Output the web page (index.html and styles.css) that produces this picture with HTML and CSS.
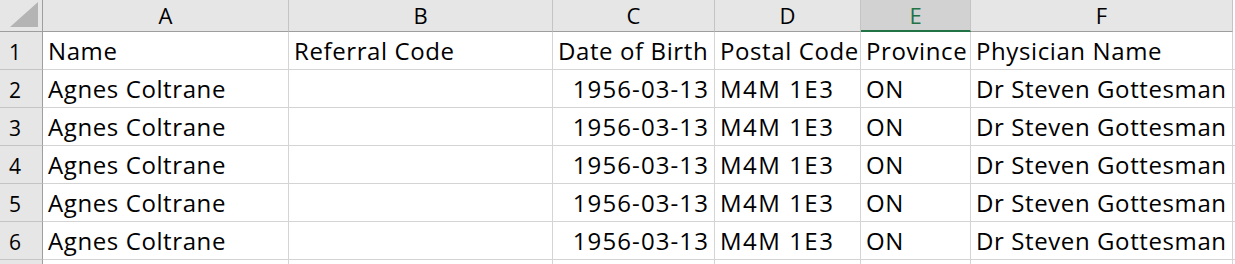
FILE: index.html
```html
<!DOCTYPE html>
<html>
<head>
<meta charset="utf-8">
<link rel="stylesheet" href="styles.css">
</head>
<body>
<div class="sheet">
  <div class="corner"><div class="tri"></div></div>
  <div class="colhead">A</div>
  <div class="colhead">B</div>
  <div class="colhead">C</div>
  <div class="colhead">D</div>
  <div class="colhead sel">E</div>
  <div class="colhead">F</div>
  <div class="colhead rest"></div>

  <div class="rowhead">1</div>
  <div class="cell">Name</div>
  <div class="cell">Referral Code</div>
  <div class="cell">Date of Birth</div>
  <div class="cell">Postal Code</div>
  <div class="cell">Province</div>
  <div class="cell">Physician Name</div>
  <div class="cell rest"></div>

  <div class="rowhead">2</div>
  <div class="cell">Agnes Coltrane</div>
  <div class="cell"></div>
  <div class="cell num">1956-03-13</div>
  <div class="cell code">M4M 1E3</div>
  <div class="cell">ON</div>
  <div class="cell">Dr Steven Gottesman</div>
  <div class="cell rest"></div>

  <div class="rowhead">3</div>
  <div class="cell">Agnes Coltrane</div>
  <div class="cell"></div>
  <div class="cell num">1956-03-13</div>
  <div class="cell code">M4M 1E3</div>
  <div class="cell">ON</div>
  <div class="cell">Dr Steven Gottesman</div>
  <div class="cell rest"></div>

  <div class="rowhead">4</div>
  <div class="cell">Agnes Coltrane</div>
  <div class="cell"></div>
  <div class="cell num">1956-03-13</div>
  <div class="cell code">M4M 1E3</div>
  <div class="cell">ON</div>
  <div class="cell">Dr Steven Gottesman</div>
  <div class="cell rest"></div>

  <div class="rowhead">5</div>
  <div class="cell">Agnes Coltrane</div>
  <div class="cell"></div>
  <div class="cell num">1956-03-13</div>
  <div class="cell code">M4M 1E3</div>
  <div class="cell">ON</div>
  <div class="cell">Dr Steven Gottesman</div>
  <div class="cell rest"></div>

  <div class="rowhead">6</div>
  <div class="cell">Agnes Coltrane</div>
  <div class="cell"></div>
  <div class="cell num">1956-03-13</div>
  <div class="cell code">M4M 1E3</div>
  <div class="cell">ON</div>
  <div class="cell">Dr Steven Gottesman</div>
  <div class="cell rest"></div>

  <div class="rowhead"></div>
  <div class="cell"></div>
  <div class="cell"></div>
  <div class="cell"></div>
  <div class="cell"></div>
  <div class="cell"></div>
  <div class="cell"></div>
  <div class="cell rest"></div>
</div>
</body>
</html>
```

FILE: styles.css
```css
html, body {
  margin: 0;
  padding: 0;
  background: #ffffff;
  overflow: hidden;
}

.sheet {
  display: grid;
  grid-template-columns: 43px 246px 264px 162px 146px 110px 262px 1fr;
  grid-template-rows: 32px repeat(7, 38px);
  height: 264px;
  overflow: hidden;
  font-family: "Open Sans", "Liberation Sans", sans-serif;
  color: #000000;
}

.sheet > div {
  box-sizing: border-box;
  white-space: nowrap;
  overflow: hidden;
}

.corner {
  background: #e6e6e6;
  border-right: 1px solid #9e9e9e;
  border-bottom: 1px solid #9e9e9e;
  position: relative;
}

.tri {
  position: absolute;
  left: 10px;
  top: 2px;
  width: 28px;
  height: 25px;
  background: #b4b4b4;
  clip-path: polygon(100% 0, 100% 100%, 0 100%);
}

.colhead {
  background: #e6e6e6;
  border-right: 1px solid #c4c4c4;
  border-bottom: 1px solid #9e9e9e;
  font-size: 22px;
  line-height: 1;
  display: flex;
  justify-content: center;
  align-items: flex-end;
  padding-bottom: 5px;
}

.colhead.sel {
  background: #d2d2d2;
  color: #217346;
  border-bottom: 2px solid #217346;
  padding-bottom: 4px;
}

.colhead.rest {
  background: #ffffff;
  border: none;
}

.rowhead {
  background: #e6e6e6;
  border-right: 1px solid #9e9e9e;
  border-bottom: 1px solid #c4c4c4;
  font-size: 21px;
  line-height: 1;
  display: flex;
  align-items: flex-end;
  padding-left: 9px;
  padding-bottom: 6px;
}

.cell {
  border-right: 1px solid #d4d4d4;
  border-bottom: 1px solid #d4d4d4;
  font-size: 24px;
  letter-spacing: 0.6px;
  line-height: 1;
  display: flex;
  align-items: flex-end;
  padding-left: 5px;
  padding-right: 6px;
  padding-bottom: 6px;
}

.cell.num {
  justify-content: flex-end;
  letter-spacing: 1.1px;
  padding-right: 5px;
}

.cell.code {
  letter-spacing: 1.5px;
}

.cell.rest {
  border-right: none;
}
```
